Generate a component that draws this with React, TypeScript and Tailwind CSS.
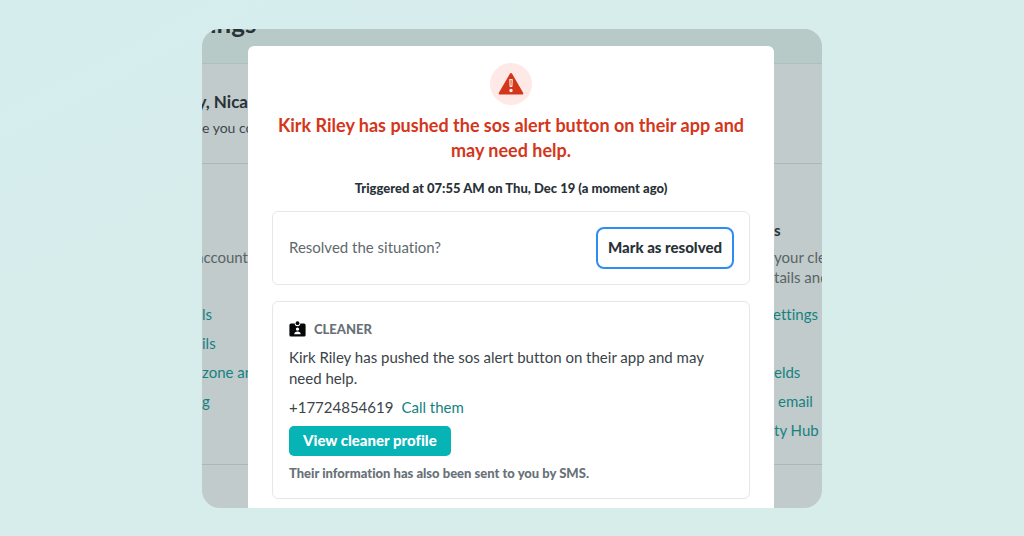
import type { ReactNode } from "react";

function Alert() {
  return (
    <span className="flex size-[42px] items-center justify-center rounded-full bg-[#fee9e6]">
      <svg viewBox="0 0 26 24" className="h-6 w-[26px]" aria-hidden="true">
        <path d="M13 2.300 24 21.300H2Z" fill="#d4361b" stroke="#d4361b" strokeWidth="2.600" strokeLinejoin="round" />
        <path d="M11.800 7.700h2.400l-.3 6.600h-1.800Z" fill="none" stroke="#fee9e6" strokeWidth="1.200" strokeLinejoin="round" />
        <circle cx="13" cy="18.500" r="1.700" fill="#fee9e6" />
      </svg>
    </span>
  );
}

function Badge() {
  return (
    <svg viewBox="0 0 17 16" className="h-4 w-[17px]" aria-hidden="true">
      <path d="M2 2.500h3.700a2.800 2.800 0 0 0 5.600 0H15A1.600 1.600 0 0 1 16.600 4v10a1.500 1.500 0 0 1-1.600 1.500H2A1.500 1.500 0 0 1 .4 14V4A1.600 1.600 0 0 1 2 2.500Z" fill="#050708" />
      <circle cx="8.500" cy="2.200" r="1.900" fill="#050708" />
      <circle cx="8.500" cy="8.100" r="1.700" fill="#fff" />
      <path d="M5.300 13.200c0-1.800 1.300-2.800 3.200-2.800s3.200 1 3.200 2.800Z" fill="#fff" />
    </svg>
  );
}

function Clip({ children, end }: { children: ReactNode; end?: boolean }) {
  return (
    <div className={end ? "flex justify-end overflow-hidden whitespace-nowrap" : "overflow-hidden whitespace-nowrap"}>
      {children}
    </div>
  );
}

function Backdrop() {
  return (
    <div className="col-start-1 row-start-1 flex min-w-0 flex-col bg-[#c1cbcb] text-[15px] leading-5 text-[#596466]">
      <div className="h-[35px] overflow-hidden border-b border-[#a9c1c0] bg-[#b7cac7] pl-2">
        <h1 className="-mt-[22px] text-[26px] leading-8 font-bold text-[#293237]">ings</h1>
      </div>
      <div className="h-[100px] border-b border-[#aab6b7] pt-[26px]">
        <div className="w-[46px]">
          <Clip end><p className="text-[17px] leading-6 font-bold text-[#293237]">y, Nica</p></Clip>
          <Clip><p className="pt-1 text-[14px] leading-5 text-[#3c474b]">e you co</p></Clip>
        </div>
      </div>
      <div className="flex h-[301px] justify-between border-b border-[#aab6b7] pt-14">
        <div className="w-[46px] pt-[27px]">
          <Clip end>account</Clip>
          <nav className="flex flex-col gap-[9px] pt-[37px] text-[#15827f]">
            <a href="#details">ls</a>
            <a href="#emails">ils</a>
            <a href="#zone"><Clip>zone and</Clip></a>
            <a href="#billing">g</a>
          </nav>
        </div>
        <div className="w-12">
          <h2 className="pb-[7px] font-bold text-[#293237]">s</h2>
          <Clip>your clea</Clip>
          <Clip>tails and</Clip>
          <nav className="flex flex-col gap-[9px] pt-[17px] text-[#15827f]">
            <a href="#settings" className="mb-[29px] pr-1"><Clip end>settings</Clip></a>
            <a href="#fields">elds</a>
            <a href="#email" className="pl-1">email</a>
            <a href="#hub"><Clip>ty Hub</Clip></a>
          </nav>
        </div>
      </div>
    </div>
  );
}

export default function App() {
  return (
    <main className="flex min-h-screen items-center justify-center bg-linear-to-br from-[#d6edee] via-[#d7edeb] to-[#d7edea] font-['Lato',sans-serif] [font-variant-ligatures:none]">
      <div className="grid w-full max-w-[620px] overflow-hidden rounded-[18px]">
        <Backdrop />
        <section role="dialog" aria-labelledby="title" className="relative col-start-1 row-start-1 mt-[17px] mr-12 ml-[46px] flex flex-col items-center rounded-t-md bg-white px-6 pt-[17px] pb-[9px] text-[#3a4449]">
          <Alert />
          <h2 id="title" className="mt-2 text-center text-[18px] leading-[25px] font-bold text-[#d4361b]">
            Kirk Riley has pushed the sos alert button on their app and<br />may need help.
          </h2>
          <p className="mt-[15px] text-[13px] leading-5 font-black text-[#293237]">Triggered at 07:55 AM on Thu, Dec 19 (a moment ago)</p>
          <div className="mt-[13px] flex w-full items-center justify-between rounded-md border border-[#e5e7e8] py-[15px] pr-[15px] pl-4 text-[15px] text-[#62696d]">
            <span>Resolved the situation?</span>
            <button type="button" className="h-[42px] rounded-lg border-2 border-[#2d8df5] bg-white px-[10px] text-[15px] font-black text-[#293237]">Mark as resolved</button>
          </div>
          <div className="mt-4 flex w-full flex-col items-start rounded-md border border-[#e5e7e8] px-4 pt-[17px] pb-4 text-[15px] leading-[21px]">
            <h3 className="flex items-center gap-2 text-[13px] font-black text-[#687178]"><Badge />CLEANER</h3>
            <p className="mt-[7px]">Kirk Riley has pushed the sos alert button on their app and may<br />need help.</p>
            <p className="mt-2 flex gap-2"><span>+17724854619</span><a href="tel:+17724854619" className="text-[#15827f]">Call them</a></p>
            <button type="button" className="mt-2 h-[30px] rounded-[5px] bg-[#06b3b5] px-[14px] text-[15px] font-black text-white">View cleaner profile</button>
            <p className="mt-2 text-[13px] leading-[18px] font-black text-[#687178]">Their information has also been sent to you by SMS.</p>
          </div>
        </section>
      </div>
    </main>
  );
}
